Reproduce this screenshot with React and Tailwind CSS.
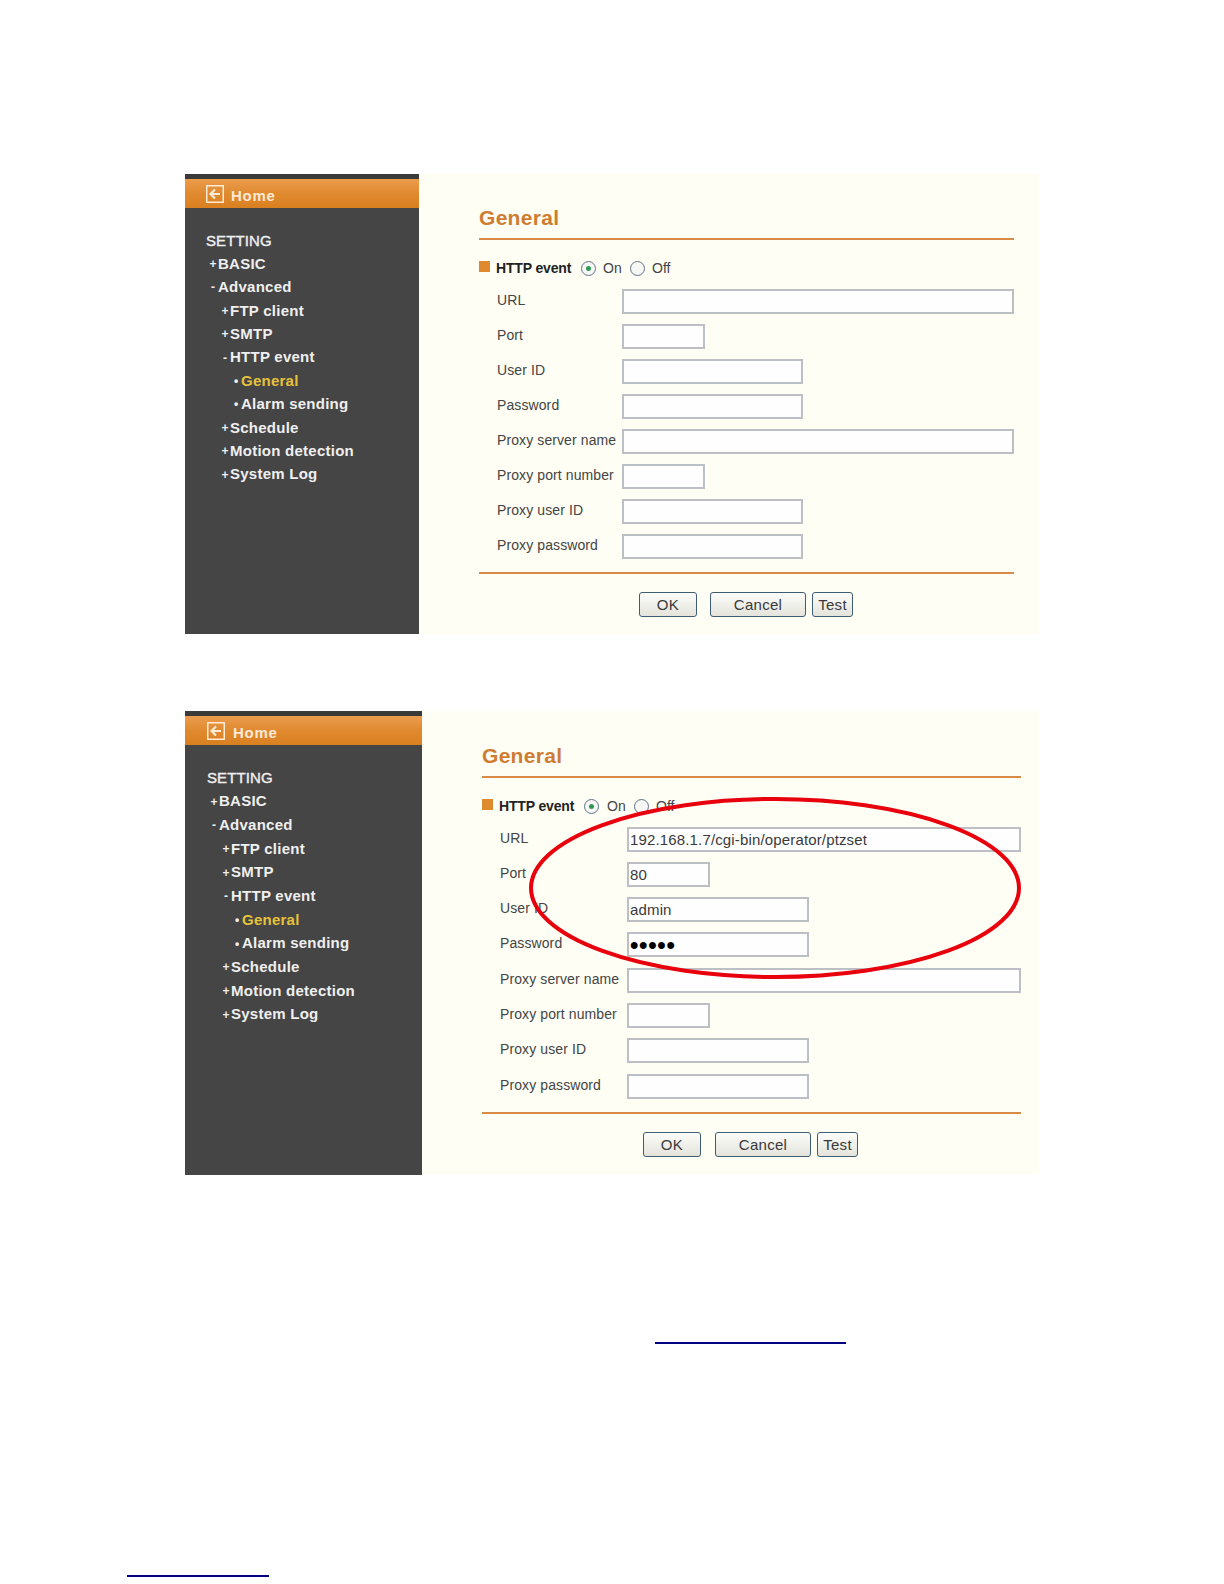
import React from "react";

const menu = [
  { mark: "+", label: "BASIC", pad: "pl-[1px]" },
  { mark: "-", label: "Advanced", pad: "pl-[1px]" },
  { mark: "+", label: "FTP client", pad: "pl-[13px]" },
  { mark: "+", label: "SMTP", pad: "pl-[13px]" },
  { mark: "-", label: "HTTP event", pad: "pl-[13px]" },
  { mark: "•", label: "General", pad: "pl-[24px]", active: true },
  { mark: "•", label: "Alarm sending", pad: "pl-[24px]" },
  { mark: "+", label: "Schedule", pad: "pl-[13px]" },
  { mark: "+", label: "Motion detection", pad: "pl-[13px]" },
  { mark: "+", label: "System Log", pad: "pl-[13px]" },
];

const first = {
  panel: "h-[460px]",
  side: "w-[234px]",
  home: "pl-[21px]",
  homeText: "ml-[7px]",
  list: "pl-[22px]",
  item: "h-[23.4px]",
  head: "pt-[30px]",
  events: "mt-[9px]",
  radioGap: "ml-[7px]",
  row: "h-[35px]",
  label: "w-[125px]",
  long: "w-[392px]",
  short: "w-[181px]",
  foot: "mt-[3px]",
  buttons: "pl-[160px]",
  cancelGap: "ml-[13px]",
  form: "w-[535px] ml-[60px]",
};

const second = {
  panel: "h-[464px]",
  side: "w-[237px]",
  home: "pl-[22px]",
  homeText: "ml-[8px]",
  list: "pl-[23px]",
  item: "h-[23.7px]",
  head: "pt-[31px]",
  events: "mt-[8.5px]",
  radioGap: "ml-[8px]",
  row: "h-[35.3px]",
  label: "w-[127px]",
  long: "w-[394px]",
  short: "w-[182px]",
  foot: "mt-[3px]",
  buttons: "pl-[161px]",
  cancelGap: "ml-[14px]",
  form: "w-[539px] ml-[60px]",
};

function HomeIcon() {
  return (
    <svg width="18" height="18" viewBox="0 0 18 18" fill="none" className="shrink-0">
      <rect x="0.75" y="0.75" width="16.5" height="16.5" stroke="#fdebd5" strokeWidth="1.5" />
      <path d="M14 9H5M9 4.5 4.5 9 9 13.5" stroke="#fdebd5" strokeWidth="2.2" />
    </svg>
  );
}

function Sidebar({ v }) {
  return (
    <div className={`${v.side} h-full shrink-0 bg-[#454545]`}>
      <div className="h-[5px] bg-[#3a3a38]" />
      <div className={`flex h-[29px] items-center bg-gradient-to-b from-[#eb9c4c] via-[#e08a30] to-[#d9801f] ${v.home}`}>
        <HomeIcon />
        <span className={`${v.homeText} mt-[5px] text-[15px] font-bold tracking-[0.7px] text-[#fbe9d6]`}>Home</span>
      </div>
      <div className={`mt-[21px] text-[#efefef] ${v.list}`}>
        <div className={`${v.item} -ml-[1px] text-[15px] leading-[23.4px] tracking-[0.1px] [-webkit-text-stroke:0.4px_#efefef]`}>SETTING</div>
        {menu.map((item) => (
          <div key={item.label} className={`flex ${v.item} items-center ${item.pad}`}>
            <span className="w-[10px] text-center text-[12px] font-bold leading-none">{item.mark}</span>
            <span
              className={`text-[15px] font-bold tracking-[0.25px] ${item.active ? "text-[#e6c23c]" : ""}`}
            >
              {item.label}
            </span>
          </div>
        ))}
      </div>
    </div>
  );
}

function Radio({ checked }) {
  return (
    <span className="flex h-[15px] w-[15px] shrink-0 items-center justify-center rounded-full border border-[#5f7488] bg-[#f7f7f5]">
      {checked && <span className="h-[5px] w-[5px] rounded-full bg-[#2f9a55]" />}
    </span>
  );
}

function Field({ v, label, size, value, type = "text" }) {
  const width = size === "long" ? v.long : size === "port" ? "w-[83px]" : v.short;
  return (
    <div className={`flex ${v.row} items-start pl-[18px]`}>
      <span className={`${v.label} shrink-0 text-[14px] leading-[23px] tracking-[0.1px] text-[#444]`}>{label}</span>
      <input
        readOnly
        type={type}
        value={value || ""}
        className={`${width} h-[25px] border-2 border-[#bcc0c4] bg-[#fefefe] px-[1px] outline-none ${
          type === "password" ? "text-[24px] font-bold tracking-[0.7px] text-black" : "text-[15px] tracking-[0.15px] text-[#3a3a3a]"
        }`}
      />
    </div>
  );
}

function Btn({ width, margin, children }) {
  return (
    <button
      className={`${width} ${margin} h-[25px] rounded-[3px] border border-[#3e5c72] bg-gradient-to-b from-[#fcfcfa] to-[#e4e4dc] text-[15px] leading-none tracking-[0.3px] text-[#3a3a3a]`}
    >
      {children}
    </button>
  );
}

function Form({ v, values = {} }) {
  return (
    <div className={`${v.form} ${v.head}`}>
      <h2 className="border-b-2 border-[#d98a45] pb-[6px] text-[21px] font-bold leading-[28px] tracking-[0.3px] text-[#cf7c32]">
        General
      </h2>
      <div className="mt-[16px] flex h-[24px] items-center text-[14px] text-[#444]">
        <span className="mb-[4px] h-[11px] w-[11px] bg-[#e08a30]" />
        <span className="ml-[6px] w-[85px] font-bold tracking-[-0.15px] text-[#222]">HTTP event</span>
        <Radio checked />
        <span className={`${v.radioGap} w-[27px]`}>On</span>
        <Radio />
        <span className="ml-[7px]">Off</span>
      </div>
      <div className={v.events}>
        <Field v={v} label="URL" size="long" value={values.url} />
        <Field v={v} label="Port" size="port" value={values.port} />
        <Field v={v} label="User ID" size="short" value={values.user} />
        <Field v={v} label="Password" size="short" value={values.pass} type="password" />
        <Field v={v} label="Proxy server name" size="long" />
        <Field v={v} label="Proxy port number" size="port" />
        <Field v={v} label="Proxy user ID" size="short" />
        <Field v={v} label="Proxy password" size="short" />
      </div>
      <div className={`${v.foot} h-[2px] bg-[#d98a45]`} />
      <div className={`mt-[18px] flex ${v.buttons}`}>
        <Btn width="w-[58px]" margin="">OK</Btn>
        <Btn width="w-[96px]" margin={v.cancelGap}>Cancel</Btn>
        <Btn width="w-[41px]" margin="ml-[6px]">Test</Btn>
      </div>
    </div>
  );
}

function Panel({ v, values, className = "" }) {
  return (
    <div className={`ml-[185px] flex w-[854px] bg-[#fefef5] ${v.panel} ${className}`}>
      <Sidebar v={v} />
      <Form v={v} values={values} />
    </div>
  );
}

export default function App() {
  return (
    <div className="h-[1584px] w-[1224px] overflow-hidden bg-white pt-[174px] font-['Liberation_Sans',Arial,sans-serif]">
      <Panel v={first} />
      <div className="relative mt-[77px]">
        <Panel
          v={second}
          values={{ url: "192.168.1.7/cgi-bin/operator/ptzset", port: "80", user: "admin", pass: "admin" }}
        />
        {/* circled settings */}
        <svg className="absolute left-[525px] top-[82px]" width="500" height="190" viewBox="0 0 500 190" fill="none">
          <ellipse cx="250" cy="95" rx="244" ry="89" stroke="#e8000c" strokeWidth="4" />
        </svg>
      </div>
      <div className="ml-[655px] mt-[167px] h-[2px] w-[191px] bg-[#000080]" />
      <div className="ml-[127px] mt-[231px] h-[1.5px] w-[142px] bg-[#000080]" />
    </div>
  );
}
